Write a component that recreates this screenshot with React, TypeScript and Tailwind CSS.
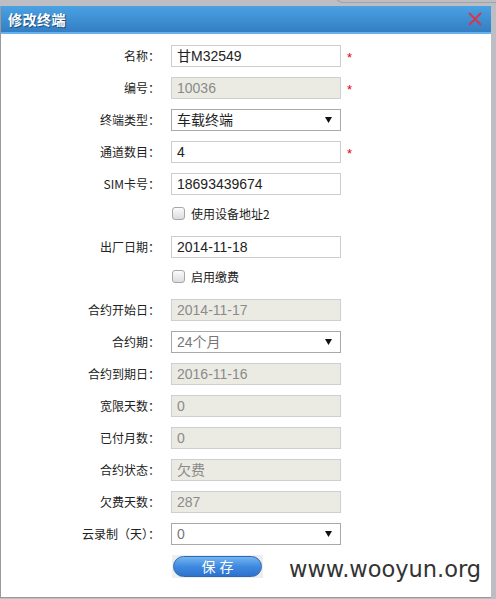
import React from 'react';

type Row =
  | { kind: 'input'; label: string; value: string; disabled?: boolean; required?: boolean }
  | { kind: 'select'; label: string; value: string; muted?: boolean }
  | { kind: 'check'; text: string };

const rows: Row[] = [
  { kind: 'input', label: '名称：', value: '甘M32549', required: true },
  { kind: 'input', label: '编号：', value: '10036', disabled: true, required: true },
  { kind: 'select', label: '终端类型：', value: '车载终端' },
  { kind: 'input', label: '通道数目：', value: '4', required: true },
  { kind: 'input', label: 'SIM卡号：', value: '18693439674' },
  { kind: 'check', text: '使用设备地址2' },
  { kind: 'input', label: '出厂日期：', value: '2014-11-18' },
  { kind: 'check', text: '启用缴费' },
  { kind: 'input', label: '合约开始日：', value: '2014-11-17', disabled: true },
  { kind: 'select', label: '合约期：', value: '24个月', muted: true },
  { kind: 'input', label: '合约到期日：', value: '2016-11-16', disabled: true },
  { kind: 'input', label: '宽限天数：', value: '0', disabled: true },
  { kind: 'input', label: '已付月数：', value: '0', disabled: true },
  { kind: 'input', label: '合约状态：', value: '欠费', disabled: true },
  { kind: 'input', label: '欠费天数：', value: '287', disabled: true },
  { kind: 'select', label: '云录制（天）：', value: '0', muted: true },
];

const labelFont = "font-['Noto_Sans_CJK_SC',sans-serif]";
const valueFont = "font-['Liberation_Sans','Noto_Sans_CJK_SC',sans-serif]";

const Label: React.FC<{ text: string }> = ({ text }) => (
  <div className={`w-[159px] shrink-0 text-right text-[12px] leading-[16px] text-[#222] ${labelFont}`}>{text}</div>
);

const App: React.FC = () => {
  return (
    <div className="relative w-[496px] h-[599px] overflow-hidden bg-[#bdbec3]">
      {/* background window edge behind the dialog */}
      <div className="absolute left-[335px] top-[-10px] right-0 h-[13px] border-l border-b border-[#a3a4a9] rounded-bl-[8px]"></div>

      <div className="flex flex-col mt-[6px] w-[491px] h-[592px] bg-white border-l border-b border-[#9a9a9a]">
        {/* header */}
        <div className="flex items-center justify-between h-[28px] px-[7px] bg-gradient-to-b from-[#4aa2e2] to-[#347ec4] border-b-2 border-[#66b2ee]">
          <span className={`text-[14px] font-bold text-white tracking-[0.5px] [text-shadow:1px_1px_1px_#1b4a7a] ${labelFont}`}>修改终端</span>
          <svg width="14" height="14" viewBox="0 0 14 14" className="mr-[2px]">
            <path d="M1 1 L13 13 M13 1 L1 13" stroke="#d8364c" strokeWidth="2" />
          </svg>
        </div>

        {/* form */}
        <div className="flex flex-col pt-[11px]">
          {rows.map((row, i) => {
            if (row.kind === 'check') {
              return (
                <div key={i} className="flex items-start h-[21px] mb-[10px] pl-[171px] pt-[1px]">
                  <span className="mt-[1px] w-[13px] h-[13px] rounded-[3px] border border-[#a7a7a7] bg-gradient-to-b from-[#fbfbfb] to-[#dcdcdc]"></span>
                  <span className={`ml-[6px] text-[12px] leading-[16px] text-[#222] ${labelFont}`}>{row.text}</span>
                </div>
              );
            }
            return (
              <div key={i} className="flex items-center h-[22px] mb-[10px]">
                <Label text={row.label} />
                {row.kind === 'input' ? (
                  <div
                    className={`ml-[11px] w-[170px] h-[22px] flex items-center pl-[5px] border text-[14px] ${valueFont} ${
                      row.disabled
                        ? 'bg-[#ebebe4] border-[#cfcfcf] text-[#8a8a8a]'
                        : 'bg-white border-[#cdcdcd] text-[#222]'
                    }`}
                  >
                    {row.value}
                  </div>
                ) : (
                  <div className={`ml-[11px] w-[170px] h-[22px] flex items-center justify-between pl-[5px] pr-[8px] border border-[#a9a9a9] bg-white text-[14px] ${valueFont} ${row.muted ? 'text-[#777]' : 'text-[#222]'}`}>
                    <span>{row.value}</span>
                    <svg width="7" height="6" viewBox="0 0 7 6">
                      <path d="M0 0 H7 L3.5 6 Z" fill="#111" />
                    </svg>
                  </div>
                )}
                {row.kind === 'input' && row.required && (
                  <span className="ml-[6px] mt-[4px] text-[13px] text-[#e00] font-['Liberation_Sans',sans-serif]">*</span>
                )}
              </div>
            );
          })}

          <div className="flex pl-[171px]">
            <div className="w-[91px] h-[23px] bg-[#eeeeee] flex items-center justify-center">
              <button className={`w-[89px] h-[21px] rounded-full border border-[#2c67b3] bg-gradient-to-b from-[#74b5f0] via-[#3f8ae0] to-[#2d72cc] text-white text-[14px] leading-[19px] tracking-[4px] pl-[4px] ${labelFont}`}>
                保存
              </button>
            </div>
          </div>
        </div>
      </div>

      {/* watermark */}
      <div className="absolute left-[289px] top-[553px] text-[22.5px] text-[#333] font-['DejaVu_Sans',sans-serif]">
        www.wooyun.org
      </div>
    </div>
  );
};

export default App;
